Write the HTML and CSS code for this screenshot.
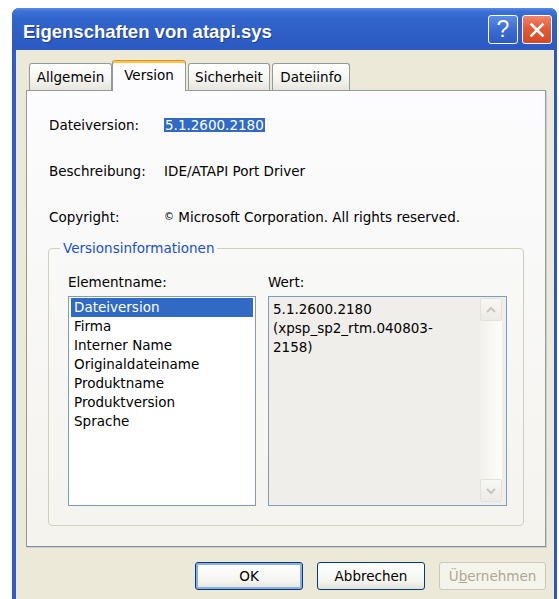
FILE: index.html
```html
<!DOCTYPE html>
<html lang="de">
<head>
<meta charset="utf-8">
<title>Eigenschaften von atapi.sys</title>
<link rel="stylesheet" href="styles.css">
</head>
<body>
<div class="window">
  <div class="titlebar">
    <span class="title">Eigenschaften von atapi.sys</span>
    <div class="caption-buttons">
      <span class="cbtn help">?</span>
      <span class="cbtn close">
        <svg width="16" height="16" viewBox="0 0 16 16"><path d="M2.5 2.5 L13.5 13.5 M13.5 2.5 L2.5 13.5" stroke="#fff" stroke-width="2.6" stroke-linecap="square"/></svg>
      </span>
    </div>
  </div>

  <div class="client">
    <div class="tabs">
      <div class="tab tab-general">Allgemein</div>
      <div class="tab tab-version active">Version</div>
      <div class="tab tab-security">Sicherheit</div>
      <div class="tab tab-fileinfo">Dateiinfo</div>
    </div>

    <div class="panel">
      <div class="props">
        <div class="prop"><span class="key">Dateiversion:</span><span class="val"><span class="sel">5.1.2600.2180</span></span></div>
        <div class="prop"><span class="key">Beschreibung:</span><span class="val">IDE/ATAPI Port Driver</span></div>
        <div class="prop"><span class="key">Copyright:</span><span class="val copy"><span class="c">©</span> Microsoft Corporation. All rights reserved.</span></div>
      </div>

      <fieldset class="group">
        <legend>Versionsinformationen</legend>
        <div class="cols">
          <div class="col">
            <div class="lbl">Elementname:</div>
            <div class="listbox">
              <div class="item selected">Dateiversion</div>
              <div class="item">Firma</div>
              <div class="item">Interner Name</div>
              <div class="item">Originaldateiname</div>
              <div class="item">Produktname</div>
              <div class="item">Produktversion</div>
              <div class="item">Sprache</div>
            </div>
          </div>
          <div class="col">
            <div class="lbl">Wert:</div>
            <div class="valuebox">
              <div class="valtext">5.1.2600.2180<br>(xpsp_sp2_rtm.040803-<br>2158)</div>
              <div class="scrollbar">
                <span class="sbtn">
                  <svg width="12" height="8" viewBox="0 0 12 8"><path d="M2 6 L6 2 L10 6" fill="none" stroke="#C6C5BE" stroke-width="2"/></svg>
                </span>
                <span class="sbtn">
                  <svg width="12" height="8" viewBox="0 0 12 8"><path d="M2 2 L6 6 L10 2" fill="none" stroke="#C6C5BE" stroke-width="2"/></svg>
                </span>
              </div>
            </div>
          </div>
        </div>
      </fieldset>
    </div>

    <div class="buttons">
      <button class="btn default">OK</button>
      <button class="btn">Abbrechen</button>
      <button class="btn disabled" disabled>Ü<u>b</u>ernehmen</button>
    </div>
  </div>
</div>
</body>
</html>
```

FILE: styles.css
```css
html, body {
  margin: 0;
  height: 100%;
  overflow: hidden;
  background: #fff;
}

body {
  font-family: "DejaVu Sans", "Liberation Sans", sans-serif;
  font-size: 13.5px;
  color: #000;
}

/* window frame */
.window {
  margin: 8px 0 0 12px;
  width: 545px;
  height: 591px;
  display: flex;
  flex-direction: column;
  background: linear-gradient(to right, #2A55BE 0, #3561C8 2px, #2C58C0 4px);
  border-radius: 7px 7px 0 0;
  overflow: hidden;
}

.titlebar {
  height: 42px;
  flex: none;
  display: flex;
  align-items: center;
  justify-content: space-between;
  padding: 0 5px 0 11px;
  background: linear-gradient(#5C8DE6 0, #3D73D8 3px, #3165CC 10px, #2E5FC6 60%, #2B5BC2 100%);
}

.title {
  font-family: "Liberation Sans", sans-serif;
  font-weight: bold;
  font-size: 18.5px;
  color: #fff;
  text-shadow: 1px 1px 0 #1E3F8F;
  padding-top: 6px;
}

.caption-buttons {
  display: flex;
  gap: 4px;
  padding-top: 1px;
}

.cbtn {
  width: 30px;
  height: 29px;
  box-sizing: border-box;
  border: 1px solid #fff;
  border-radius: 3px;
  display: flex;
  align-items: center;
  justify-content: center;
  color: #fff;
}

.help {
  background: linear-gradient(#5B8CE8, #3C6BD3 50%, #2E5BC4);
  font-family: "Liberation Sans", sans-serif;
  font-size: 23px;
  line-height: 1;
}

.close {
  background: linear-gradient(#F0866A, #E35A36 45%, #D24A26);
}

/* client area */
.client {
  flex: 1;
  margin: 0 3px 0 4px;
  background: #ECE9D8;
  padding: 10px 8px 0 10px;
  display: flex;
  flex-direction: column;
}

.tabs {
  height: 30px;
  display: flex;
  align-items: flex-end;
  padding-left: 3px;
  position: relative;
  z-index: 1;
}

.tab {
  height: 27px;
  box-sizing: border-box;
  border: 1px solid #919B9C;
  border-bottom: none;
  border-radius: 3px 3px 0 0;
  background: linear-gradient(#FFFFFF, #F6F5F1 55%, #E6E5DD);
  display: flex;
  align-items: center;
  justify-content: center;
  padding-bottom: 1px;
}

.tab-general { width: 83px; }
.tab-version { width: 74px; }
.tab-security { width: 82px; margin-left: 2px; }
.tab-fileinfo { width: 78px; margin-left: 2px; }

.tab.active {
  height: 31px;
  margin-bottom: -1px;
  background: #FCFCFE;
  border-top: 1px solid #E68B2C;
  box-shadow: inset 0 2px 0 #FFC83C;
  padding-bottom: 3px;
}

.panel {
  height: 457px;
  box-sizing: border-box;
  border: 1px solid #919B9C;
  border-right-color: #8A9CB8;
  border-bottom-color: #7A8DAF;
  background: linear-gradient(#FCFCFE, #F4F3EE);
  box-shadow: 1px 1px 0 #D0CEBF;
  padding: 25px 0 0 22px;
}

.props {
  display: flex;
  flex-direction: column;
  gap: 28px;
}

.prop {
  display: flex;
  line-height: 18px;
}

.key {
  width: 115px;
  flex: none;
}

.sel {
  display: inline-block;
  background: #316AC5;
  color: #fff;
  line-height: 14px;
  padding: 0 1px;
}

.copy .c {
  font-size: 10px;
  vertical-align: 2px;
}

/* version info group */
.group {
  margin: 13px 0 0 -1px;
  width: 476px;
  box-sizing: border-box;
  border: 1px solid #D0D0BF;
  border-radius: 4px;
  padding: 0;
  min-width: 0;
}

.group legend {
  margin-left: 11px;
  padding: 0 3px;
  color: #1A4FCF;
  line-height: 18px;
}

.cols {
  display: grid;
  grid-template-columns: 188px 239px;
  column-gap: 12px;
  padding: 16px 16px 19px 19px;
}

.lbl {
  line-height: 18px;
  margin-bottom: 5px;
}

.listbox {
  height: 210px;
  box-sizing: border-box;
  border: 1px solid #7F9DB9;
  background: #fff;
  padding: 1px 2px;
}

.item {
  line-height: 19px;
  height: 19px;
  padding-left: 3px;
}

.item.selected {
  background: #316AC5;
  color: #fff;
}

.valuebox {
  height: 210px;
  box-sizing: border-box;
  border: 1px solid #7F9DB9;
  background: #EFEEEA;
  display: flex;
}

.valtext {
  flex: 1;
  padding: 3px 0 0 4px;
  line-height: 19px;
}

.scrollbar {
  width: 22px;
  flex: none;
  margin: 1px 4px 3px 0;
  display: flex;
  flex-direction: column;
  justify-content: space-between;
  background: linear-gradient(to right, #F2F1EC, #FDFDFA);
}

.sbtn {
  height: 23px;
  box-sizing: border-box;
  border: 1px solid #E2E1DA;
  border-radius: 2px;
  background: linear-gradient(#F7F7F4, #ECEBE6);
  display: flex;
  align-items: center;
  justify-content: center;
}

/* dialog buttons */
.buttons {
  display: flex;
  justify-content: flex-end;
  gap: 14px;
  margin-top: 15px;
}

.btn {
  width: 108px;
  height: 28px;
  box-sizing: border-box;
  border: 1px solid #003C74;
  border-radius: 3px;
  background: linear-gradient(#FFFFFF, #F4F4F0 70%, #E3E1D8 100%);
  font: inherit;
  color: #000;
  padding: 0;
}

.btn.default {
  box-shadow: inset 0 0 0 2px #8AAEE8;
}

.btn.disabled {
  width: 107px;
  border-color: #CAC8BB;
  background: #F5F4EA;
  color: #ACA899;
}
```
